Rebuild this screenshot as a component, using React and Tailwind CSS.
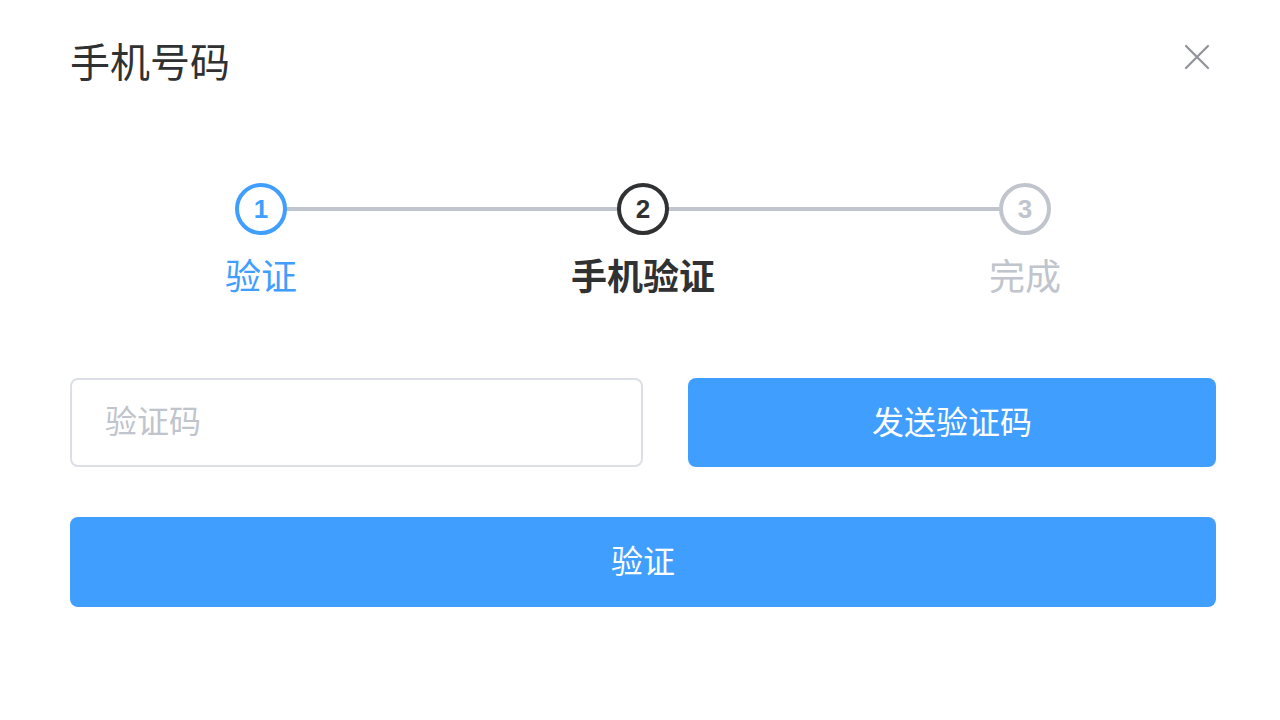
import React from 'react';

const steps = [
    { n: 1, label: '验证', state: 'done' },
    { n: 2, label: '手机验证', state: 'active' },
    { n: 3, label: '完成', state: 'wait' },
];

const circleCls = {
    done: 'border-[#409eff] text-[#409eff]',
    active: 'border-[#303133] text-[#303133]',
    wait: 'border-[#c0c4cc] text-[#c0c4cc]',
};

const labelCls = {
    done: 'text-[#409eff]',
    active: 'text-[#303133] font-bold',
    wait: 'text-[#c0c4cc]',
};

const App = () => {
    return (
        <div
            className="relative w-full h-[720px] bg-white pl-[70px] pr-[64px]"
            style={{ fontFamily: "'Liberation Sans', 'Noto Sans CJK SC', sans-serif" }}
        >
            {/* 标题 */}
            <div className="pt-[43px]">
                <h2 className="text-[40px] leading-[40px] text-[#303133]">手机号码</h2>
            </div>
            <button className="absolute top-[44px] right-[70px] w-[26px] h-[26px] flex items-center justify-center">
                <svg width="26" height="26" viewBox="0 0 26 26" fill="none">
                    <path d="M2 2L24 24M24 2L2 24" stroke="#909399" strokeWidth="2.2" strokeLinecap="round" />
                </svg>
            </button>

            {/* 步骤条 */}
            <div className="flex mt-[100px]">
                {steps.map((s, i) => (
                    <div key={s.n} className="relative flex-1 flex flex-col items-center">
                        {i < steps.length - 1 && (
                            <div className="absolute top-[24px] left-1/2 w-full h-[4px] bg-[#c0c4cc]" />
                        )}
                        <div
                            className={`relative z-10 w-[52px] h-[52px] rounded-full border-[4px] bg-white flex items-center justify-center text-[26px] font-bold ${circleCls[s.state]}`}
                        >
                            {s.n}
                        </div>
                        <div className={`mt-[25px] text-[36px] leading-[36px] ${labelCls[s.state]}`}>{s.label}</div>
                    </div>
                ))}
            </div>

            {/* 验证码 */}
            <div className="grid grid-cols-[573px_1fr] gap-[45px] mt-[82px]">
                <input
                    type="text"
                    placeholder="验证码"
                    className="h-[89px] rounded-[8px] border-[2px] border-[#dcdfe6] px-[33px] text-[32px] text-[#606266] placeholder:text-[#c0c4cc] outline-none"
                />
                <button className="h-[89px] rounded-[8px] bg-[#409eff] text-white text-[32px]">发送验证码</button>
            </div>

            <button className="w-full h-[90px] mt-[50px] rounded-[8px] bg-[#409eff] text-white text-[32px]">验证</button>
        </div>
    );
};

export default App;
